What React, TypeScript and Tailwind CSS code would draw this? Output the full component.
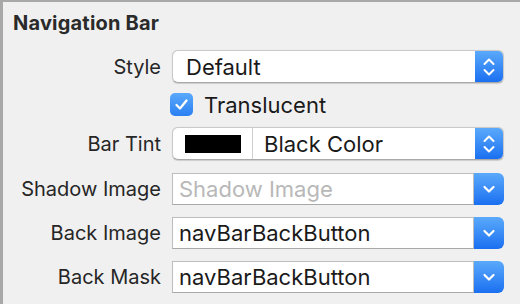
import { FC, ReactNode } from 'react';

const font = { fontFamily: 'Inter, "Liberation Sans", sans-serif' };

const Label: FC<{ children: ReactNode }> = ({ children }) => (
  <div className="w-[161px] shrink-0 text-right text-[20px] text-[#262626] leading-none">{children}</div>
);

// Up/down chevrons for the stepper-style popup button
const Stepper = () => (
  <div className="w-[28px] self-stretch rounded-r-[5px] bg-gradient-to-b from-[#5aa9fb] to-[#1a6ff0] flex items-center justify-center">
    <svg width="14" height="22" viewBox="0 0 14 22" fill="none" stroke="white" strokeWidth="2" strokeLinecap="round" strokeLinejoin="round">
      <path d="M2.5 8 L7 3.5 L11.5 8" />
      <path d="M2.5 14 L7 18.5 L11.5 14" />
    </svg>
  </div>
);

const PopUp: FC<{ children: ReactNode }> = ({ children }) => (
  <div className="flex h-[33px] w-[332px] items-stretch rounded-[6px] border border-[#c9c9c9] border-b-[#a9a9a9] bg-white shadow-[0_0.5px_1px_rgba(0,0,0,0.15)]">
    <div className="flex flex-1 items-center min-w-0">{children}</div>
    <Stepper />
  </div>
);

const Combo: FC<{ value?: string; placeholder?: string }> = ({ value, placeholder }) => (
  <div className="flex h-[32px] w-[332px] items-stretch">
    <div className="flex flex-1 items-center border border-[#bdbdbd] border-b-[#a9a9a9] bg-white pl-[6px] text-[22px] leading-none">
      {value ? <span className="text-[#1a1a1a]">{value}</span> : <span className="text-[#b8b8b8]">{placeholder}</span>}
    </div>
    <div className="w-[30px] rounded-r-[6px] bg-gradient-to-b from-[#5aa9fb] to-[#1a6ff0] flex items-center justify-center">
      <svg width="14" height="10" viewBox="0 0 14 10" fill="none" stroke="white" strokeWidth="2.2" strokeLinecap="round" strokeLinejoin="round">
        <path d="M2.5 3 L7 7.5 L11.5 3" />
      </svg>
    </div>
  </div>
);

const Row: FC<{ label: string; children: ReactNode; className?: string }> = ({ label, children, className = '' }) => (
  <div className={`flex items-center gap-[11px] ${className}`}>
    <Label>{label}</Label>
    {children}
  </div>
);

export default function App() {
  return (
    <div className="w-[520px] h-[304px] bg-[#f0f0f0] border-l-[3px] border-t-[2px] border-[#a8a8a8] overflow-hidden" style={font}>
      <div className="pl-[10px] pt-[11px] text-[20px] font-bold text-[#2a2a2a] leading-none tracking-[0.01em]">Navigation Bar</div>

      <div className="flex flex-col -ml-[3px] mt-[17px]">
        <Row label="Style">
          <PopUp>
            <span className="pl-[13px] text-[22px] text-[#1a1a1a] leading-none">Default</span>
          </PopUp>
        </Row>

        <div className="flex items-center mt-[10px] pl-[170px] gap-[11px]">
          <div className="w-[23px] h-[23px] rounded-[5px] bg-gradient-to-b from-[#5aa9fb] to-[#2a7ff2] flex items-center justify-center">
            <svg width="15" height="13" viewBox="0 0 15 13" fill="none" stroke="white" strokeWidth="2.3" strokeLinecap="round" strokeLinejoin="round">
              <path d="M2.5 7 L6 10.5 L12.5 2.5" />
            </svg>
          </div>
          <span className="text-[22px] text-[#1a1a1a] leading-none">Translucent</span>
        </div>

        <Row label="Bar Tint" className="mt-[11px]">
          <PopUp>
            <div className="flex h-full w-[80px] items-center justify-center border-r border-[#d0d0d0]">
              <div className="w-[56px] h-[18px] bg-black" />
            </div>
            <span className="pl-[11px] text-[22px] text-[#1a1a1a] leading-none">Black Color</span>
          </PopUp>
        </Row>

        <Row label="Shadow Image" className="mt-[13px]">
          <Combo placeholder="Shadow Image" />
        </Row>

        <Row label="Back Image" className="mt-[12px]">
          <Combo value="navBarBackButton" />
        </Row>

        <Row label="Back Mask" className="mt-[12px]">
          <Combo value="navBarBackButton" />
        </Row>
      </div>
    </div>
  );
}
